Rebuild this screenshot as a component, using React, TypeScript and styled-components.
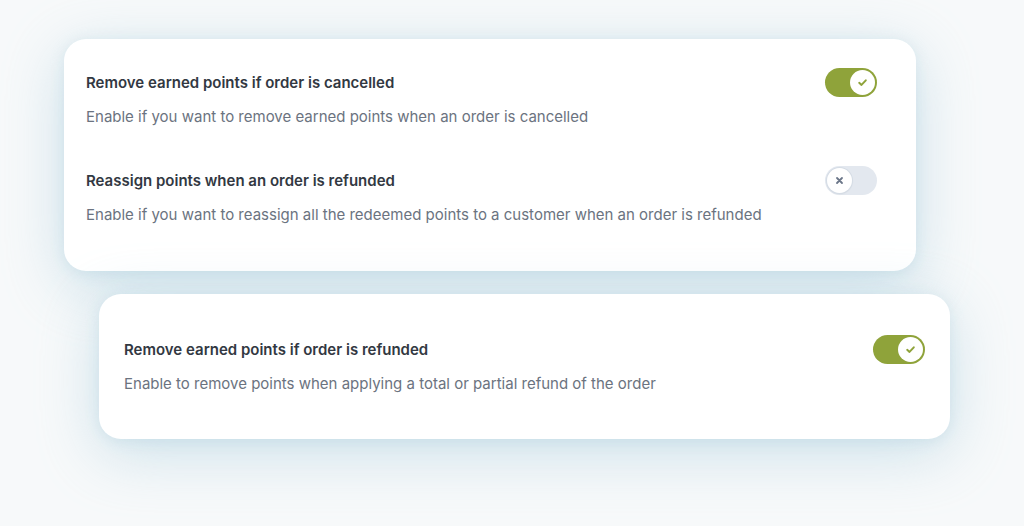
import React from "react";
import styled, { createGlobalStyle } from "styled-components";

const Global = createGlobalStyle`
  html, body { margin: 0; padding: 0; }
  body {
    background: #f7f9fa;
    font-family: Inter, "Noto Sans", sans-serif;
    -webkit-font-smoothing: antialiased;
  }
`;

const Page = styled.div`
  width: 1024px;
  height: 526px;
  box-sizing: border-box;
  padding-top: 39px;
  display: flex;
  flex-direction: column;
  gap: 23px;
  overflow: hidden;
`;

const Card = styled.section<{ $left: number; $width: number; $pt: number; $pb: number; $pl: number; $pr: number }>`
  margin-left: ${(p) => p.$left}px;
  width: ${(p) => p.$width}px;
  box-sizing: border-box;
  padding: ${(p) => `${p.$pt}px ${p.$pr}px ${p.$pb}px ${p.$pl}px`};
  background: #ffffff;
  border-radius: 22px;
  box-shadow: 0 14px 60px rgba(150, 195, 214, 0.45), 0 2px 14px rgba(170, 205, 220, 0.3);
  display: flex;
  flex-direction: column;
  gap: 39px;
`;

const Setting = styled.div`
  display: flex;
  flex-direction: column;
  gap: 10px;
`;

const Header = styled.div`
  display: flex;
  align-items: center;
  justify-content: space-between;
  height: 29px;
`;

const Title = styled.h3`
  margin: 0;
  font-size: 15px;
  line-height: 20px;
  font-weight: 600;
  color: #323842;
`;

const Desc = styled.p`
  margin: 0;
  font-size: 15px;
  line-height: 20px;
  font-weight: 400;
  color: #6b7380;
`;

const Track = styled.button<{ $on: boolean }>`
  position: relative;
  width: 52px;
  height: 29px;
  border: none;
  padding: 0;
  border-radius: 15px;
  background: ${(p) => (p.$on ? "#8fa33a" : "#e3e8ef")};
  cursor: pointer;
  flex-shrink: 0;
`;

const Knob = styled.span<{ $on: boolean }>`
  position: absolute;
  top: 2px;
  left: ${(p) => (p.$on ? "25px" : "2px")};
  width: 25px;
  height: 25px;
  border-radius: 50%;
  background: #ffffff;
  box-shadow: ${(p) => (p.$on ? "none" : "0 0 0 1px #d5dce5, 0 1px 2px rgba(0,0,0,0.08)")};
  display: flex;
  align-items: center;
  justify-content: center;
`;

function Toggle({ on }: { on: boolean }) {
  return (
    <Track $on={on} aria-pressed={on}>
      <Knob $on={on}>
        {on ? (
          <svg width="11" height="11" viewBox="0 0 10 10">
            <path d="M2 5.3 L4.1 7.2 L8 3" fill="none" stroke="#8fa33a" strokeWidth="1.8" strokeLinecap="round" strokeLinejoin="round" />
          </svg>
        ) : (
          <svg width="9" height="9" viewBox="0 0 9 9">
            <path d="M2 2 L7 7 M7 2 L2 7" fill="none" stroke="#6b7689" strokeWidth="1.8" strokeLinecap="round" />
          </svg>
        )}
      </Knob>
    </Track>
  );
}

function SettingItem({ title, desc, on }: { title: string; desc: string; on: boolean }) {
  return (
    <Setting>
      <Header>
        <Title>{title}</Title>
        <Toggle on={on} />
      </Header>
      <Desc>{desc}</Desc>
    </Setting>
  );
}

export default function App() {
  return (
    <>
      <Global />
      <Page>
        <Card $left={64} $width={852} $pt={29} $pb={46} $pl={22} $pr={39}>
          <SettingItem
            title="Remove earned points if order is cancelled"
            desc="Enable if you want to remove earned points when an order is cancelled"
            on
          />
          <SettingItem
            title="Reassign points when an order is refunded"
            desc="Enable if you want to reassign all the redeemed points to a customer when an order is refunded"
            on={false}
          />
        </Card>
        <Card $left={99} $width={851} $pt={41} $pb={45} $pl={25} $pr={25}>
          <SettingItem
            title="Remove earned points if order is refunded"
            desc="Enable to remove points when applying a total or partial refund of the order"
            on
          />
        </Card>
      </Page>
    </>
  );
}
